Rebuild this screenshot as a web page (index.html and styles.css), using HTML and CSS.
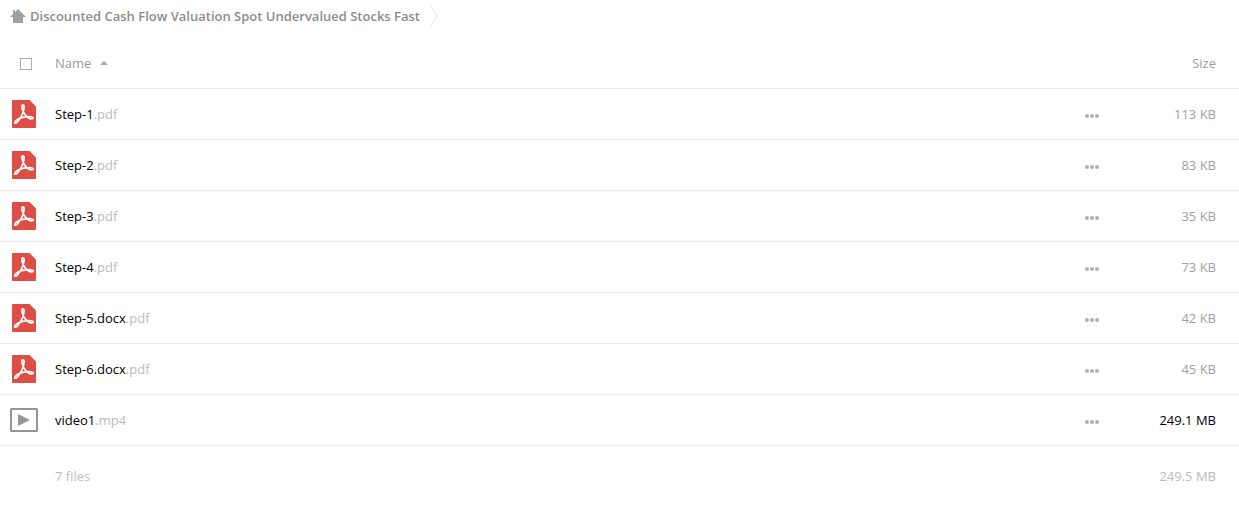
FILE: index.html
```
<!DOCTYPE html>
<html lang="en">
<head>
<meta charset="utf-8">
<title>Files</title>
<link rel="stylesheet" href="styles.css">
</head>
<body>
<svg class="sprite" aria-hidden="true">
  <symbol id="pdf" viewBox="0 0 24 28">
    <path fill="#dd4f46" d="M1 0h16.500l6.500 6.500V27a1 1 0 0 1-1 1H1a1 1 0 0 1-1-1V1a1 1 0 0 1 1-1z"/>
    <path fill="none" stroke="#fff" stroke-width="1.700" stroke-linejoin="round" d="M9.900 6C10 4.400 12.100 4.400 12.100 6.500C12 11 9 17.500 6 21.300C4.300 23.600 2.500 23.800 2.700 22.300C3 20 8 17.600 13.500 16.900C17 16.400 21.200 16.700 21.200 18C21.200 19.200 18.400 19.200 16.500 18C12.500 15.400 9.600 9.500 9.900 6z"/>
  </symbol>
  <symbol id="video" viewBox="0 0 28 24">
    <rect x="1" y="1" width="26" height="22" rx=".5" fill="#fff" stroke="#969696" stroke-width="2"/>
    <path fill="#969696" d="M8 6l12 6-12 6z"/>
  </symbol>
  <symbol id="dots" viewBox="0 0 14 4">
    <g fill="#b0b0b0"><circle cx="2" cy="2" r="2"/><circle cx="7" cy="2" r="2"/><circle cx="12" cy="2" r="2"/></g>
  </symbol>
</svg>
<nav class="crumbs" aria-label="Breadcrumb">
  <a class="crumb" href="#">
    <svg class="home" viewBox="0 0 16 14" aria-hidden="true"><path fill="#a0a0a0" d="M8 0l8 8h-3v6H3V8H0l3-3V1h2v2z"/></svg>
    <span>Discounted Cash Flow Valuation Spot Undervalued Stocks Fast</span>
  </a>
  <svg class="chevron" viewBox="0 0 9 24" aria-hidden="true"><path fill="none" stroke="#e2e2e2" d="M.5 0L8 12 .5 24"/></svg>
</nav>
<table class="files">
  <thead>
    <tr>
      <th class="pick"><input class="check" type="checkbox" aria-label="Select all"></th>
      <th class="name"><button class="sort" type="button">Name<svg class="arrow" viewBox="0 0 8 4" aria-hidden="true"><path fill="#aaa" d="M4 0l4 4H0z"/></svg></button></th>
      <th class="menu"></th>
      <th class="size"><button class="sort" type="button">Size</button></th>
    </tr>
  </thead>
  <tbody>
    <tr><td class="pick"><svg class="pdf"><use href="#pdf"/></svg></td><td class="name"><a href="#">Step-1<span class="ext">.pdf</span></a></td><td class="menu"><button class="more" type="button" aria-label="More"><svg class="dots"><use href="#dots"/></svg></button></td><td class="size">113 KB</td></tr>
    <tr><td class="pick"><svg class="pdf"><use href="#pdf"/></svg></td><td class="name"><a href="#">Step-2<span class="ext">.pdf</span></a></td><td class="menu"><button class="more" type="button" aria-label="More"><svg class="dots"><use href="#dots"/></svg></button></td><td class="size">83 KB</td></tr>
    <tr><td class="pick"><svg class="pdf"><use href="#pdf"/></svg></td><td class="name"><a href="#">Step-3<span class="ext">.pdf</span></a></td><td class="menu"><button class="more" type="button" aria-label="More"><svg class="dots"><use href="#dots"/></svg></button></td><td class="size">35 KB</td></tr>
    <tr><td class="pick"><svg class="pdf"><use href="#pdf"/></svg></td><td class="name"><a href="#">Step-4<span class="ext">.pdf</span></a></td><td class="menu"><button class="more" type="button" aria-label="More"><svg class="dots"><use href="#dots"/></svg></button></td><td class="size">73 KB</td></tr>
    <tr><td class="pick"><svg class="pdf"><use href="#pdf"/></svg></td><td class="name"><a href="#">Step-5.docx<span class="ext">.pdf</span></a></td><td class="menu"><button class="more" type="button" aria-label="More"><svg class="dots"><use href="#dots"/></svg></button></td><td class="size">42 KB</td></tr>
    <tr><td class="pick"><svg class="pdf"><use href="#pdf"/></svg></td><td class="name"><a href="#">Step-6.docx<span class="ext">.pdf</span></a></td><td class="menu"><button class="more" type="button" aria-label="More"><svg class="dots"><use href="#dots"/></svg></button></td><td class="size">45 KB</td></tr>
    <tr><td class="pick"><svg class="video"><use href="#video"/></svg></td><td class="name"><a href="#">video1<span class="ext">.mp4</span></a></td><td class="menu"><button class="more" type="button" aria-label="More"><svg class="dots"><use href="#dots"/></svg></button></td><td class="size large">249.1 MB</td></tr>
  </tbody>
  <tfoot>
    <tr><td class="pick"></td><td class="name">7 files</td><td class="menu"></td><td class="size">249.5 MB</td></tr>
  </tfoot>
</table>
</body>
</html>
```
FILE: styles.css
```
body {
  margin: 0;
  background: #fff;
  color: #000;
  font: 13px/20px "Open Sans", "Noto Sans", sans-serif;
}

a {
  color: inherit;
  text-decoration: none;
}

button {
  border: 0;
  padding: 0;
  background: none;
  color: inherit;
  font: inherit;
  cursor: pointer;
}

svg {
  display: block;
}

.sprite {
  position: absolute;
  width: 0;
  height: 0;
}

.crumbs {
  display: flex;
  align-items: center;
  gap: 9px;
  height: 32px;
  padding: 0 10px;
  margin-bottom: 6px;
}

.crumb {
  display: flex;
  align-items: center;
  gap: 4px;
  color: #8c8c8c;
  font-weight: 600;
}

.home {
  width: 16px;
  height: 14px;
}

.chevron {
  width: 9px;
  height: 24px;
}

.files {
  width: 100%;
  border-collapse: separate;
  border-spacing: 0;
  table-layout: fixed;
}

th,
td {
  height: 50px;
  padding: 0;
  border-bottom: 1px solid #ebebeb;
  font-weight: 400;
  text-align: left;
  vertical-align: middle;
}

th {
  color: #999;
}

.pick {
  width: 55px;
}

.menu {
  width: 39px;
}

.size {
  width: 100px;
  padding-right: 23px;
  color: #a0a0a0;
  text-align: right;
}

.size.large {
  color: #000;
}

.check {
  display: block;
  appearance: none;
  box-sizing: border-box;
  width: 12px;
  height: 12px;
  margin: 2px 0 0 20px;
  border: 1px solid #aaa;
}

.sort {
  display: inline-flex;
  align-items: center;
  gap: 9px;
}

.arrow {
  width: 8px;
  height: 4px;
}

.pdf {
  width: 24px;
  height: 28px;
  margin-left: 12px;
}

.video {
  width: 28px;
  height: 24px;
  margin-left: 10px;
}

.ext {
  color: #bbb;
}

.more {
  display: block;
  padding: 10px 8px 6px;
}

.dots {
  width: 14px;
  height: 4px;
}

tfoot td {
  height: 60px;
  border: 0;
  color: #bbb;
}

tfoot .size {
  color: #bbb;
}
```
